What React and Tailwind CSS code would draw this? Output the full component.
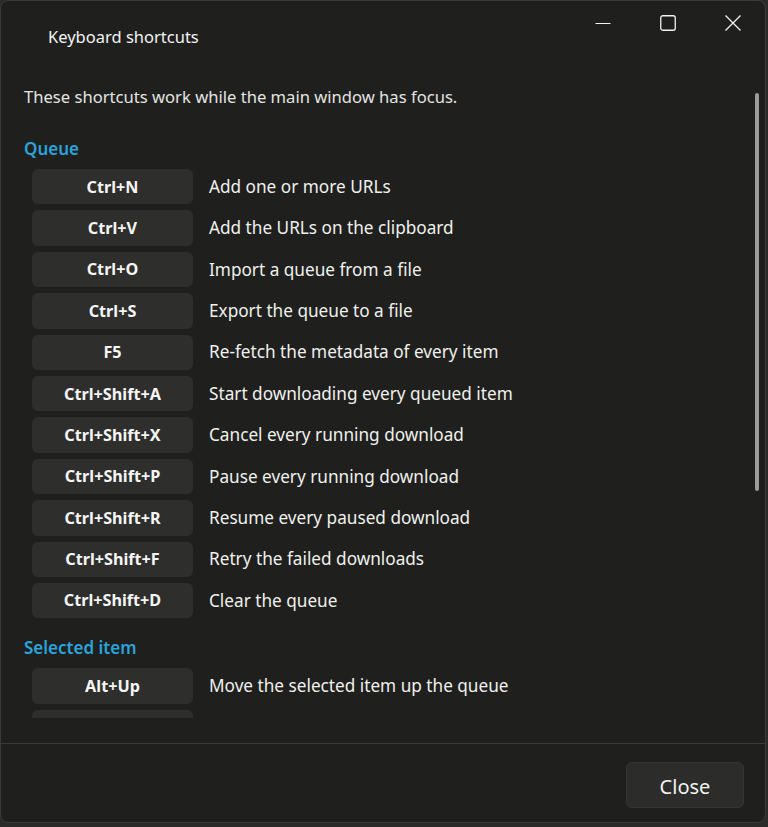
import React from 'react';

const groups = [
  {
    title: 'Queue',
    items: [
      ['Ctrl+N', 'Add one or more URLs'],
      ['Ctrl+V', 'Add the URLs on the clipboard'],
      ['Ctrl+O', 'Import a queue from a file'],
      ['Ctrl+S', 'Export the queue to a file'],
      ['F5', 'Re-fetch the metadata of every item'],
      ['Ctrl+Shift+A', 'Start downloading every queued item'],
      ['Ctrl+Shift+X', 'Cancel every running download'],
      ['Ctrl+Shift+P', 'Pause every running download'],
      ['Ctrl+Shift+R', 'Resume every paused download'],
      ['Ctrl+Shift+F', 'Retry the failed downloads'],
      ['Ctrl+Shift+D', 'Clear the queue'],
    ],
  },
  {
    title: 'Selected item',
    items: [
      ['Alt+Up', 'Move the selected item up the queue'],
      ['Alt+Down', 'Move the selected item down the queue'],
    ],
  },
];

function CaptionButton({ children }) {
  return (
    <button type="button" className="flex h-[44px] w-[65px] items-center justify-center text-[#f2f2f2]">
      {children}
    </button>
  );
}

export default function App() {
  return (
    <div className="h-[827px] w-[768px] bg-[#2b2b2a] overflow-hidden" style={{ fontFamily: '"Segoe UI", "Noto Sans", sans-serif' }}>
      <div className="relative flex h-[823px] w-[766px] flex-col overflow-hidden rounded-lg border border-[#3b3b39] bg-[#1f201d] text-[#f3f3f3]">
        {/* title bar */}
        <div className="flex h-[72px] shrink-0 items-start">
          <div className="flex-1 pl-[47px] pt-[25px] text-[16.5px] leading-[22px]">Keyboard shortcuts</div>
          <div className="flex">
            <CaptionButton>
              <svg width="16" height="16" viewBox="0 0 16 16"><path d="M0.5 8.5h15" stroke="currentColor" strokeWidth="1.2" /></svg>
            </CaptionButton>
            <CaptionButton>
              <svg width="16" height="16" viewBox="0 0 16 16"><rect x="0.75" y="0.75" width="14.5" height="14.5" rx="2" fill="none" stroke="currentColor" strokeWidth="1.3" /></svg>
            </CaptionButton>
            <CaptionButton>
              <svg width="16" height="16" viewBox="0 0 16 16"><path d="M0.5 0.5l15 15M15.5 0.5l-15 15" stroke="currentColor" strokeWidth="1.3" /></svg>
            </CaptionButton>
          </div>
        </div>

        {/* scrolling content */}
        <div className="h-[645px] shrink-0 overflow-hidden pl-[23px]">
          <p className="pt-[13px] text-[16.6px] leading-[22px] text-[#e4e4e2]">These shortcuts work while the main window has focus.</p>
          {groups.map((g, gi) => (
            <div key={g.title} className={gi === 0 ? 'mt-[30px]' : 'mt-[19px]'}>
              <h2 className="text-[17px] font-semibold leading-[22px] text-[#2aa3dc]">{g.title}</h2>
              <div className="mt-[9px] flex flex-col gap-[6px] pl-[8px]">
                {g.items.map(([key, desc]) => (
                  <div key={key} className="flex items-center gap-[16px]">
                    <div className="flex h-[35.4px] w-[161px] shrink-0 items-center justify-center rounded-md bg-[#2e2f2c] text-[16.2px] font-bold text-[#f5f5f5]">
                      {key}
                    </div>
                    <div className="text-[17.2px] text-[#f0f0ee]">{desc}</div>
                  </div>
                ))}
              </div>
            </div>
          ))}
        </div>

        <div className="h-[25px] shrink-0" />
        <div className="border-t border-[#393a37]" />

        {/* footer */}
        <div className="flex flex-1 items-start justify-end pr-[21px] pt-[18px]">
          <button type="button" className="h-[46px] w-[118px] rounded-md border border-[#353633] bg-[#2c2d2a] pt-[4px] text-[20px] text-[#f3f3f3]">
            Close
          </button>
        </div>

        {/* overlay scrollbar */}
        <div className="absolute left-[754px] top-[92px] h-[398px] w-[4px] rounded-full bg-[#9b9b9a]" />
      </div>
    </div>
  );
}
